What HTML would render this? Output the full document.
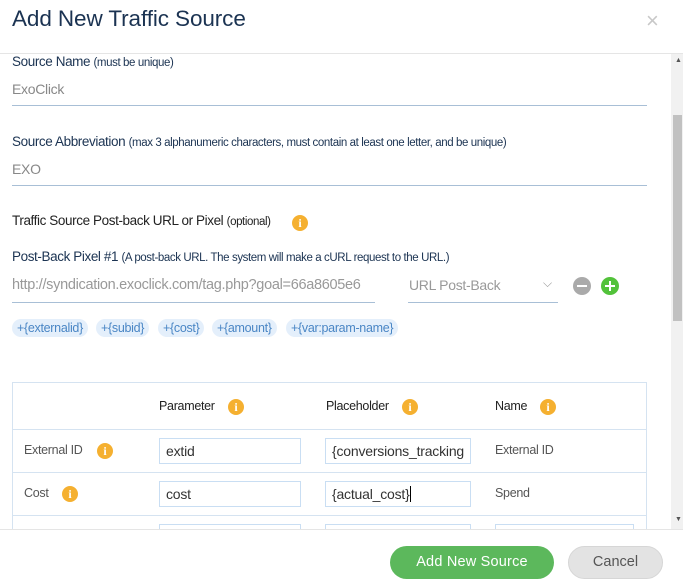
<!DOCTYPE html>
<html><head><meta charset="utf-8"><style>
*{box-sizing:border-box;margin:0;padding:0}
body{width:683px;height:585px;background:#fff;font-family:"Liberation Sans",sans-serif;position:relative;overflow:hidden;color:#1d3557}
.a{position:absolute;white-space:nowrap}
.t{font-size:22.5px;color:#1b3352;left:12px;top:6px;letter-spacing:-0.1px}
.lbl{font-size:13.5px;color:#1b3352;letter-spacing:-0.4px}
.lbl small{font-size:11.5px}
.val{font-size:14px;color:#888;letter-spacing:-0.3px}
.line{position:absolute;height:1px;background:#a8bfd6}
.info{position:absolute;width:16px;height:16px;border-radius:50%;background:#f5b030;color:#fff;font:bold 12px "Liberation Serif",serif;text-align:center;line-height:16px}
.chip{position:absolute;top:319px;height:18px;border-radius:9px;background:#e4effb;color:#4a86c5;font-size:12.5px;line-height:18px;padding:0 5px;letter-spacing:-0.3px}
.cell{font-size:12.5px;color:#555;letter-spacing:-0.3px}
.inp{position:absolute;height:26px;border:1px solid #c9def3;font-size:14px;color:#333;padding:4px 6px;overflow:hidden;white-space:nowrap;letter-spacing:-0.2px}
.hl{position:absolute;left:12px;width:635px;height:1px;background:#d5e3f1}
</style></head><body>
<div class="a t">Add New Traffic Source</div>
<div class="a" style="left:646px;top:8px;font-size:22px;color:#c8c8c8;font-weight:300">×</div>
<div class="a" style="left:0;top:53px;width:683px;height:1px;background:#e5e5e5"></div>
<div class="a" style="left:671px;top:54px;width:12px;height:475px;background:#f1f1f1"></div>
<div class="a" style="left:673px;top:115px;width:9px;height:206px;background:#c1c1c1"></div>
<div class="a" style="left:675px;top:57px;font-size:7px;color:#555">▲</div>
<div class="a" style="left:675px;top:516px;font-size:7px;color:#555">▼</div>

<div class="a lbl" style="left:12px;top:54px">Source Name <small>(must be unique)</small></div>
<div class="a val" style="left:12px;top:81px">ExoClick</div>
<div class="line" style="left:12px;top:105px;width:635px"></div>

<div class="a lbl" style="left:12px;top:134px">Source Abbreviation <small>(max 3 alphanumeric characters, must contain at least one letter, and be unique)</small></div>
<div class="a val" style="left:12px;top:161px">EXO</div>
<div class="line" style="left:12px;top:185px;width:635px"></div>

<div class="a lbl" style="left:12px;top:213px;color:#222">Traffic Source Post-back URL or Pixel <small>(optional)</small></div>
<div class="info" style="left:292px;top:215px">i</div>
<div class="a lbl" style="left:12px;top:249px">Post-Back Pixel #1 <small>(A post-back URL. The system will make a cURL request to the URL.)</small></div>
<div class="a val" style="left:12px;top:277px;font-size:14.5px;color:#999">http://syndication.exoclick.com/tag.php?goal=66a8605e6</div>
<div class="line" style="left:12px;top:302px;width:363px"></div>
<div class="a val" style="left:409px;top:277px;color:#999">URL Post-Back</div>
<div class="a" style="left:543px;top:276px;font-size:12px;color:#999">⌵</div>
<div class="line" style="left:408px;top:302px;width:150px"></div>
<div class="a" style="left:573px;top:277px;width:18px;height:18px;border-radius:50%;background:#aaa"><div class="a" style="left:4px;top:8px;width:10px;height:2px;background:#fff"></div></div>
<div class="a" style="left:601px;top:277px;width:18px;height:18px;border-radius:50%;background:#52c23a"><div class="a" style="left:4px;top:8px;width:10px;height:2px;background:#fff"></div><div class="a" style="left:8px;top:4px;width:2px;height:10px;background:#fff"></div></div>

<div class="chip" style="left:12px">+{externalid}</div>
<div class="chip" style="left:96px">+{subid}</div>
<div class="chip" style="left:158px">+{cost}</div>
<div class="chip" style="left:212px">+{amount}</div>
<div class="chip" style="left:286px">+{var:param-name}</div>

<div class="a" style="left:12px;top:382px;width:635px;height:160px;border:1px solid #d5e3f1;border-bottom:none"></div>
<div class="hl" style="top:429px"></div>
<div class="hl" style="top:472px"></div>
<div class="hl" style="top:515px"></div>
<div class="a cell" style="left:159px;top:399px;color:#222">Parameter</div>
<div class="info" style="left:228px;top:399px">i</div>
<div class="a cell" style="left:326px;top:399px;color:#222">Placeholder</div>
<div class="info" style="left:402px;top:399px">i</div>
<div class="a cell" style="left:495px;top:399px;color:#222">Name</div>
<div class="info" style="left:540px;top:399px">i</div>

<div class="a cell" style="left:24px;top:443px">External ID</div>
<div class="info" style="left:97px;top:443px">i</div>
<div class="inp" style="left:159px;top:438px;width:142px">extid</div>
<div class="inp" style="left:325px;top:438px;width:146px">{conversions_tracking</div>
<div class="a cell" style="left:495px;top:443px">External ID</div>

<div class="a cell" style="left:24px;top:486px">Cost</div>
<div class="info" style="left:62px;top:486px">i</div>
<div class="inp" style="left:159px;top:481px;width:142px">cost</div>
<div class="inp" style="left:325px;top:481px;width:146px">{actual_cost}<span style="border-left:1px solid #000"></span></div>
<div class="a cell" style="left:495px;top:486px">Spend</div>

<div class="inp" style="left:159px;top:524px;width:142px"></div>
<div class="inp" style="left:325px;top:524px;width:146px"></div>
<div class="inp" style="left:495px;top:524px;width:139px"></div>

<div class="a" style="left:0;top:529px;width:683px;height:56px;background:#fff;border-top:1px solid #e5e5e5"></div>
<div class="a" style="left:390px;top:546px;width:164px;height:33px;border-radius:17px;background:#5cb85c;color:#fff;font-size:14.5px;text-align:center;line-height:32px;letter-spacing:0.2px">Add New Source</div>
<div class="a" style="left:568px;top:546px;width:95px;height:33px;border-radius:17px;background:#e3e3e3;border:1px solid #d6d6d6;color:#555;font-size:14.5px;text-align:center;line-height:31px">Cancel</div>
</body></html>
